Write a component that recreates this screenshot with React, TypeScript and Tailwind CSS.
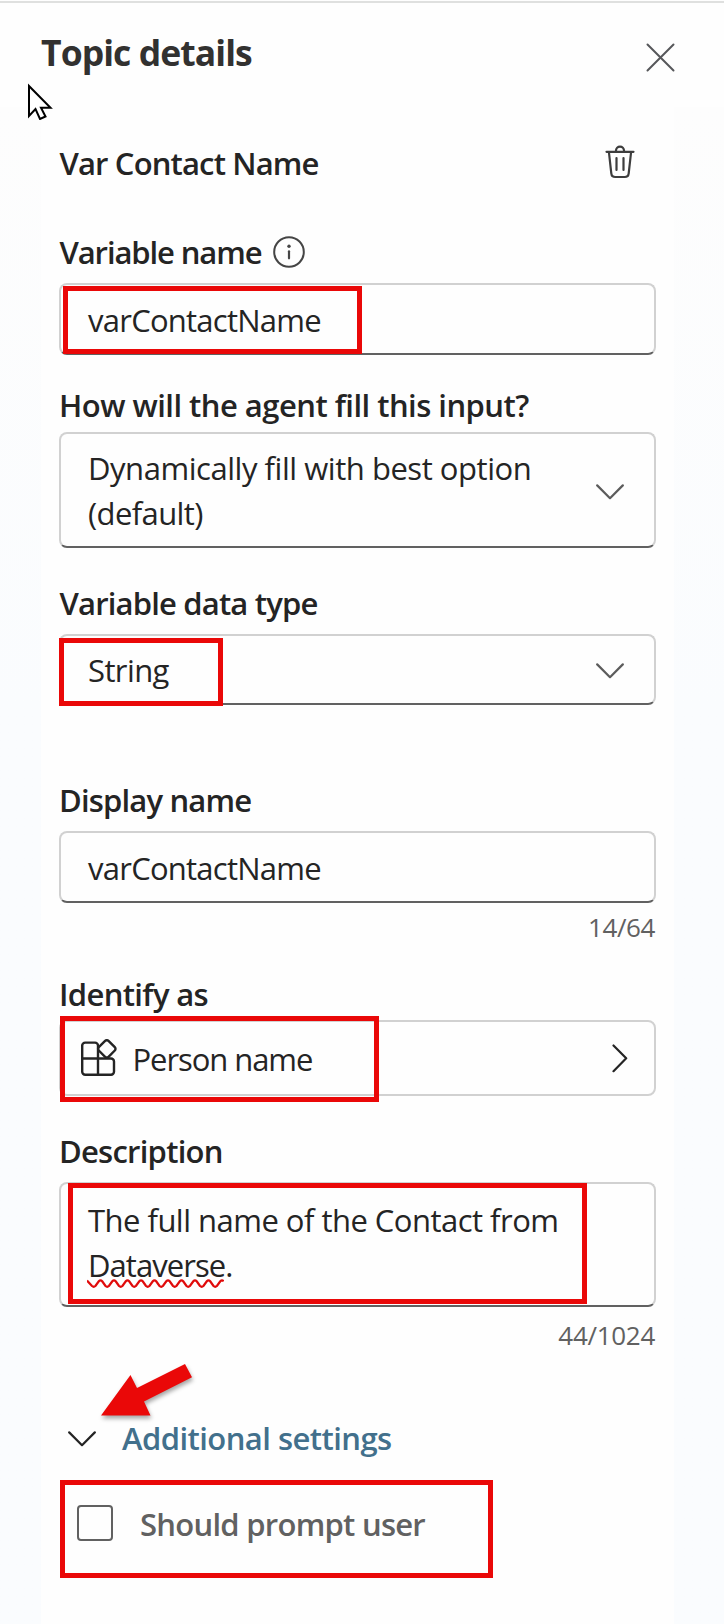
import React from 'react';

function Label({ children, className = '' }: { children: React.ReactNode; className?: string }) {
  return (
    <div className={`h-10 whitespace-nowrap text-[31px] leading-10 font-semibold ${className}`}>{children}</div>
  );
}

function Field({ children, className = '' }: { children: React.ReactNode; className?: string }) {
  return (
    <div
      className={`relative flex rounded-lg border-2 border-[#d1d1d1] text-[31px] whitespace-nowrap ${className}`}
    >
      {children}
    </div>
  );
}

function Highlight({ className }: { className: string }) {
  return <div className={`pointer-events-none absolute border-[5px] border-[#ea0808] ${className}`} />;
}

function ChevronDown({ className = '', color = '#5c5c5c' }: { className?: string; color?: string }) {
  return (
    <svg width="28" height="16" viewBox="0 0 28 16" fill="none" className={`shrink-0 ${className}`}>
      <path d="M1.2 1.4 14 14.2 26.8 1.4" stroke={color} strokeWidth="2.2" strokeLinecap="round" strokeLinejoin="round" />
    </svg>
  );
}

function TrashIcon() {
  return (
    <svg width="30" height="34" viewBox="0 0 30 34" fill="none" stroke="#3d3d3d" strokeWidth="2.2" strokeLinecap="round" strokeLinejoin="round">
      <path d="M1.5 6.8h27" />
      <path d="M11 6.5V5.6a4 4 0 0 1 8 0v.9" />
      <path d="m3.9 7 2.4 21.4a4 4 0 0 0 4 3.6h9.4a4 4 0 0 0 4-3.6L26.1 7" />
      <path d="M11.5 13v12M18.5 13v12" />
    </svg>
  );
}

function InfoIcon() {
  return (
    <svg width="32" height="32" viewBox="0 0 32 32" fill="none">
      <circle cx="16" cy="16" r="14.8" stroke="#454545" strokeWidth="2" />
      <circle cx="16" cy="10.3" r="1.7" fill="#454545" />
      <path d="M16 15.3v7" stroke="#454545" strokeWidth="2.2" strokeLinecap="round" />
    </svg>
  );
}

function GridIcon() {
  return (
    <svg width="38" height="38" viewBox="0 0 38 38" fill="none" stroke="#242424" strokeWidth="2.4" strokeLinejoin="round">
      <path d="M18 19.5V6.6a3 3 0 0 0-3-3H5.2a3 3 0 0 0-3 3v26.2a3 3 0 0 0 3 3H31a3 3 0 0 0 3-3V22.500a3 3 0 0 0-3-3H2.2M18 19.500v16.300" />
      <path d="m25.100 1.900-6.300 6.200a2.400 2.400 0 0 0 0 3.400l6.300 6.300a2.400 2.400 0 0 0 3.400 0l6.300-6.300a2.400 2.400 0 0 0 0-3.400l-6.300-6.200a2.400 2.400 0 0 0-3.400 0Z" />
    </svg>
  );
}

function Squiggle() {
  const wave = 'M0 1.5 ' + Array.from({ length: 10 }, (_, i) => {
    const x = i * 13.5;
    return `L${x + 5} 7 Q${x + 6.7} 8.5 ${x + 8.4} 7 L${x + 11.8} 2.3 Q${x + 13.5} 0.4 ${x + 15.2} 2.3`;
  }).join(' ');
  return (
    <svg width="137" height="9" viewBox="0 0 137 9" fill="none" className="absolute top-[36px] -left-px">
      <path d={wave} stroke="#e00b0b" strokeWidth="2.2" />
    </svg>
  );
}

export default function App() {
  return (
    <div className="relative min-h-[1624px] w-[724px] overflow-hidden bg-[#fefefe] font-['Open_Sans',sans-serif] text-[#242424]">
      <div className="flex h-[107px] flex-col">
        <div className="mt-px h-0.5 shrink-0 bg-[#dfe0df]" />
        <header className="mt-[25px] flex items-start justify-between pr-[49px] pl-[41px]">
          <h1 className="text-[35.5px] leading-[49px] font-bold tracking-[-0.93px] text-[#323130]">Topic details</h1>
          <svg width="29" height="29" viewBox="0 0 29 29" className="mt-[15px]">
            <path d="M1.5 1.5 27.5 27.5M27.5 1.5 1.5 27.5" stroke="#56575a" strokeWidth="2" strokeLinecap="round" />
          </svg>
        </header>
      </div>

      <div className="bg-gradient-to-b from-[#fdfdfd] to-[#fafcfe] to-40%">
        <main className="ml-[41px] h-[1517px] w-[633px] bg-[#fefefe] px-[18px] pt-9">
          <div className="flex items-start justify-between pr-[21px]">
            <Label className="pl-[0.5px] tracking-[-0.85px]">Var Contact Name</Label>
            <div className="mt-0.5"><TrashIcon /></div>
          </div>

          <div className="mt-[49px] flex items-start">
            <Label className="w-[214px] pl-[0.5px] tracking-[-1.1px]">Variable name</Label>
            <div className="mt-1"><InfoIcon /></div>
          </div>
          <Field className="mt-[11px] h-[72px] border-b-[#616161] pt-[15px] pl-[27px] leading-10 tracking-[-0.75px]">
            varContactName
            <Highlight className="top-px left-[2px] h-[68px] w-[299px]" />
          </Field>

          <Label className="mt-[30px] tracking-[-0.53px]">How will the agent fill this input?</Label>
          <Field className="mt-[7px] h-[116px] justify-between border-b-[#616161] pt-3 pr-[30px] pl-[27px] leading-[45px]">
            <div>
              <div className="tracking-[-0.46px]">Dynamically fill with best option</div>
              <div className="tracking-[-0.6px]">(default)</div>
            </div>
            <ChevronDown className="mt-[38px] mr-[0.5px]" />
          </Field>

          <Label className="mt-[35px] pl-[0.5px] tracking-[-0.82px]">Variable data type</Label>
          <Field className="mt-[11px] h-[71px] justify-between border-b-[#616161] pt-3.5 pr-[30px] pl-[27px] leading-10 tracking-[-0.6px]">
            <span>String</span>
            <ChevronDown className="mt-[13px] mr-[0.5px]" />
            <Highlight className="top-[2px] -left-[2px] h-[68px] w-[164px]" />
          </Field>

          <Label className="mt-[75px] tracking-[-0.83px]">Display name</Label>
          <Field className="mt-[11px] h-[72px] border-b-[#616161] pt-[15px] pl-[27px] leading-10 tracking-[-0.75px]">
            varContactName
          </Field>
          <div className="mt-2 pr-px text-right text-[26px] leading-8 tracking-[-0.4px] text-[#616161]">14/64</div>

          <Label className="mt-[31px] tracking-[-0.65px]">Identify as</Label>
          <Field className="mt-1.5 h-[76px] justify-between pt-[17px] pr-[26px] pl-[19px] leading-10">
            <div className="flex items-start">
              <GridIcon />
              <span className="ml-[14.5px] tracking-[-1.07px]">Person name</span>
            </div>
            <svg width="16" height="29" viewBox="0 0 16 29" fill="none" className="mt-[5px]">
              <path d="M1.5 1.5 14.2 14.3 1.5 27.2" stroke="#242424" strokeWidth="2.2" strokeLinecap="round" strokeLinejoin="round" />
            </svg>
            <Highlight className="-top-[6px] -left-px h-[86px] w-[319px]" />
          </Field>

          <Label className="mt-[35px] tracking-[-0.75px]">Description</Label>
          <Field className="mt-[11px] h-[125px] border-b-[#616161] pt-3.5 pl-[27px] leading-[45px]">
            <div>
              <div className="tracking-[-0.52px]">The full name of the Contact from</div>
              <div className="relative tracking-[-0.95px]">
                Dataverse.
                <Squiggle />
              </div>
            </div>
            <Highlight className="-top-px left-[7px] h-[121px] w-[519px]" />
          </Field>
          <div className="mt-3 pr-px text-right text-[26px] leading-8 tracking-[-0.3px] text-[#616161]">44/1024</div>

          <div className="relative mt-[67px] flex items-start pl-[9px]">
            <ChevronDown className="mt-[13px] -ml-[0.5px]" color="#242424" />
            <Label className="ml-[26.5px] tracking-[-0.55px] text-[#42708c]">Additional settings</Label>
            <svg width="104" height="66" viewBox="0 0 104 66" className="absolute -top-[58px] left-[38px] drop-shadow-[1px_3px_2px_rgba(0,0,0,0.35)]">
              <path d="m4 55.5 29.500-40.500 6.500 13 48-24 7 13.300-48 24.200 6.500 14Z" fill="#ea0808" />
            </svg>
          </div>

          <div className="relative mt-[46px] flex items-start pl-[18px] text-[#616161]">
            <div className="mt-px size-9 rounded-[4px] border-2 border-[#616161]" />
            <Label className="ml-[27px] tracking-[-0.73px]">Should prompt user</Label>
            <Highlight className="-top-6 left-px h-[98px] w-[433px]" />
          </div>
        </main>
      </div>

      <svg width="26" height="37" viewBox="0 0 26 37" className="absolute top-[83px] left-[27px]">
        <path d="M2 3v30l6.500-7 4.500 10 5.500-2.500-4.500-8.700h9.500Z" fill="#fff" stroke="#000" strokeWidth="2" />
      </svg>
    </div>
  );
}
